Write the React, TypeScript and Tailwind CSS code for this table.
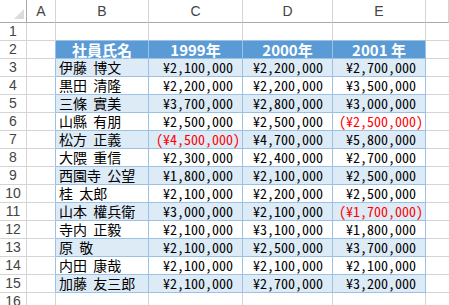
import React from "react";

type Row = { name: string; y1999: string; y2000: string; y2001: string };

const rows: Row[] = [
  { name: "伊藤 博文", y1999: "2,100,000", y2000: "2,200,000", y2001: "2,700,000" },
  { name: "黒田 清隆", y1999: "2,200,000", y2000: "2,200,000", y2001: "3,500,000" },
  { name: "三條 實美", y1999: "3,700,000", y2000: "2,800,000", y2001: "3,000,000" },
  { name: "山縣 有朋", y1999: "2,500,000", y2000: "2,500,000", y2001: "-2,500,000" },
  { name: "松方 正義", y1999: "-4,500,000", y2000: "4,700,000", y2001: "5,800,000" },
  { name: "大隈 重信", y1999: "2,300,000", y2000: "2,400,000", y2001: "2,700,000" },
  { name: "西園寺 公望", y1999: "1,800,000", y2000: "2,100,000", y2001: "2,500,000" },
  { name: "桂 太郎", y1999: "2,100,000", y2000: "2,200,000", y2001: "2,500,000" },
  { name: "山本 權兵衛", y1999: "3,000,000", y2000: "2,100,000", y2001: "-1,700,000" },
  { name: "寺内 正毅", y1999: "2,100,000", y2000: "3,100,000", y2001: "1,800,000" },
  { name: "原 敬", y1999: "2,100,000", y2000: "2,500,000", y2001: "3,700,000" },
  { name: "内田 康哉", y1999: "2,100,000", y2000: "2,100,000", y2001: "2,100,000" },
  { name: "加藤 友三郎", y1999: "2,100,000", y2000: "2,700,000", y2001: "3,200,000" },
];

const font = "font-['Noto_Sans_CJK_JP',sans-serif]";
const headFont = "font-['Liberation_Sans','Noto_Sans_CJK_JP',sans-serif]";

const RowHead = ({ n }: { n: number }) => (
  <div
    className={`h-[18px] flex items-center justify-center border-r border-b border-[#d4d4d4] text-[14px] leading-[17px] text-[#444] ${headFont}`}
  >
    {n}
  </div>
);

const Money = ({ value, band }: { value: string; band: boolean }) => {
  const neg = value.startsWith("-");
  const text = neg ? `(¥${value.slice(1)})` : `¥${value}`;
  return (
    <div
      className={`h-[18px] flex items-center justify-end border-r border-b border-[#9bc2e6] text-[14px] leading-[17px] [font-feature-settings:'hwid'] ${font} ${
        band ? "bg-[#ddebf7]" : "bg-white"
      } ${neg ? "pr-[2px] text-[#ff0000]" : "pr-[9px] text-black"}`}
    >
      {text}
    </div>
  );
};

export default function App() {
  return (
    <div className="w-[449px] h-[305px] overflow-hidden bg-white">
      <div className="grid grid-cols-[27px_29px_93px_94px_90px_93px_1fr]">
        {/* column headers */}
        <div className="h-[23px] flex items-end justify-end pr-[2px] pb-[3px] border-r border-b border-[#ababab]">
          <svg width="10" height="10" viewBox="0 0 10 10">
            <polygon points="10,0 10,10 0,10" fill="#dcdcdc" />
          </svg>
        </div>
        {["A", "B", "C", "D", "E", ""].map((c, i) => (
          <div
            key={i}
            className={`h-[23px] flex items-center justify-center border-r border-b border-[#d4d4d4] border-b-[#ababab] text-[14px] text-[#444] ${headFont}`}
          >
            {c}
          </div>
        ))}

        {/* row 1 */}
        <RowHead n={1} />
        <div className="h-[18px] border-r border-b border-[#d4d4d4]" />
        {[0, 1, 2, 3].map((i) => (
          <div key={i} className="h-[18px] border-r border-b border-[#d4d4d4] border-b-[#9bc2e6]" />
        ))}
        <div className="h-[18px] border-b border-[#d4d4d4]" />

        {/* row 2 - table header */}
        <RowHead n={2} />
        <div className="h-[18px] border-r border-b border-[#d4d4d4] border-r-[#9bc2e6]" />
        {["社員氏名", "1999年", "2000年", "2001 年"].map((h) => (
          <div
            key={h}
            className={`h-[18px] flex items-center justify-center bg-[#5b9bd5] border-r border-b border-[#9bc2e6] text-white font-bold text-[15px] leading-[17px] ${font}`}
          >
            {h}
          </div>
        ))}
        <div className="h-[18px] border-b border-[#d4d4d4]" />

        {/* data rows */}
        {rows.map((r, i) => {
          const band = i % 2 === 0;
          return (
            <React.Fragment key={r.name}>
              <RowHead n={i + 3} />
              <div className="h-[18px] border-r border-b border-[#d4d4d4] border-r-[#9bc2e6]" />
              <div
                className={`h-[18px] flex items-center pl-[3px] border-r border-b border-[#9bc2e6] text-[14px] leading-[17px] text-black [word-spacing:3px] ${font} ${
                  band ? "bg-[#ddebf7]" : "bg-white"
                }`}
              >
                {r.name}
              </div>
              <Money value={r.y1999} band={band} />
              <Money value={r.y2000} band={band} />
              <Money value={r.y2001} band={band} />
              <div className="h-[18px] border-b border-[#d4d4d4]" />
            </React.Fragment>
          );
        })}

        {/* row 16 */}
        <RowHead n={16} />
        {[0, 1, 2, 3, 4].map((i) => (
          <div key={i} className="h-[18px] border-r border-b border-[#d4d4d4]" />
        ))}
        <div className="h-[18px] border-b border-[#d4d4d4]" />
      </div>
    </div>
  );
}
